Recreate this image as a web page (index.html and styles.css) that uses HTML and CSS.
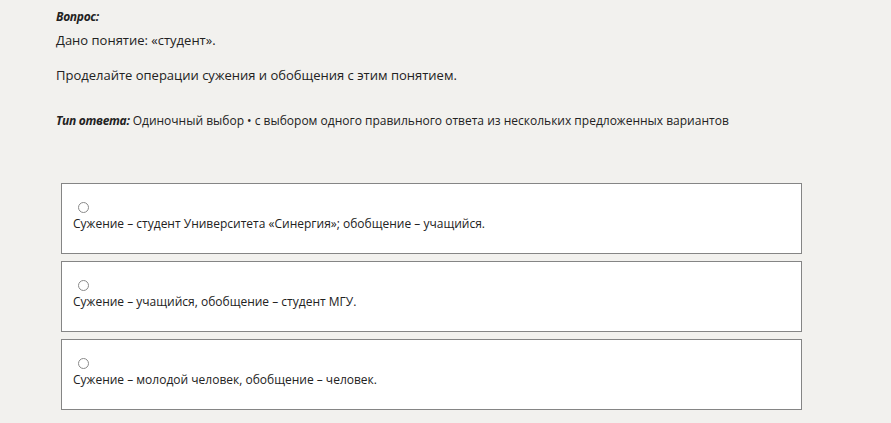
FILE: index.html
```html
<!DOCTYPE html>
<html lang="ru">

<head>
    <meta charset="UTF-8">
    <meta name="viewport" content="width=device-width, initial-scale=1.0">
    <title>Вопрос</title>
    <link rel="stylesheet" href="styles.css">
</head>

<body>

    <div class="question">
        <div class="question-label">Вопрос:</div>
        <p class="question-text">Дано понятие: «студент».</p>
        <p class="question-text second">Проделайте операции сужения и обобщения с этим понятием.</p>

        <p class="answer-type"><em>Тип ответа:</em> Одиночный выбор • с выбором одного правильного ответа из нескольких предложенных вариантов</p>

        <div class="options">
            <label class="option">
                <span class="radio"></span>
                <span class="option-text">Сужение – студент Университета «Синергия»; обобщение – учащийся.</span>
            </label>
            <label class="option">
                <span class="radio"></span>
                <span class="option-text">Сужение – учащийся, обобщение – студент МГУ.</span>
            </label>
            <label class="option">
                <span class="radio"></span>
                <span class="option-text">Сужение – молодой человек, обобщение – человек.</span>
            </label>
        </div>
    </div>

</body>

</html>
```

FILE: styles.css
```css
body {
    font-family: "Open Sans", Arial, sans-serif;
    font-size: 13px;
    line-height: 20px;
    color: #222;
    background-color: #f2f1ee;
    margin: 0;
    padding: 0;
}

.question {
    padding: 7px 0 0 56px;
}

.question-label {
    font-size: 12px;
    font-weight: bold;
    font-style: italic;
    letter-spacing: -0.3px;
}

.question-text {
    margin: 3px 0 0 0;
}

.question-text.second {
    margin-top: 15px;
}

.answer-type {
    font-size: 12px;
    margin: 26px 0 0 0;
}

.answer-type em {
    font-weight: bold;
    letter-spacing: -0.3px;
}

.options {
    margin-top: 52px;
    margin-left: 5px;
    width: 741px;
}

.option {
    display: block;
    box-sizing: border-box;
    height: 71px;
    margin-bottom: 7px;
    padding: 18px 11px 0 11px;
    background-color: #fff;
    border: 1px solid #858585;
    font-size: 12px;
    line-height: 18px;
    cursor: pointer;
}

.radio {
    display: block;
    box-sizing: border-box;
    width: 11px;
    height: 11px;
    margin: 0 0 2px 5px;
    border: 1px solid #8a8a8a;
    border-radius: 50%;
}
```
